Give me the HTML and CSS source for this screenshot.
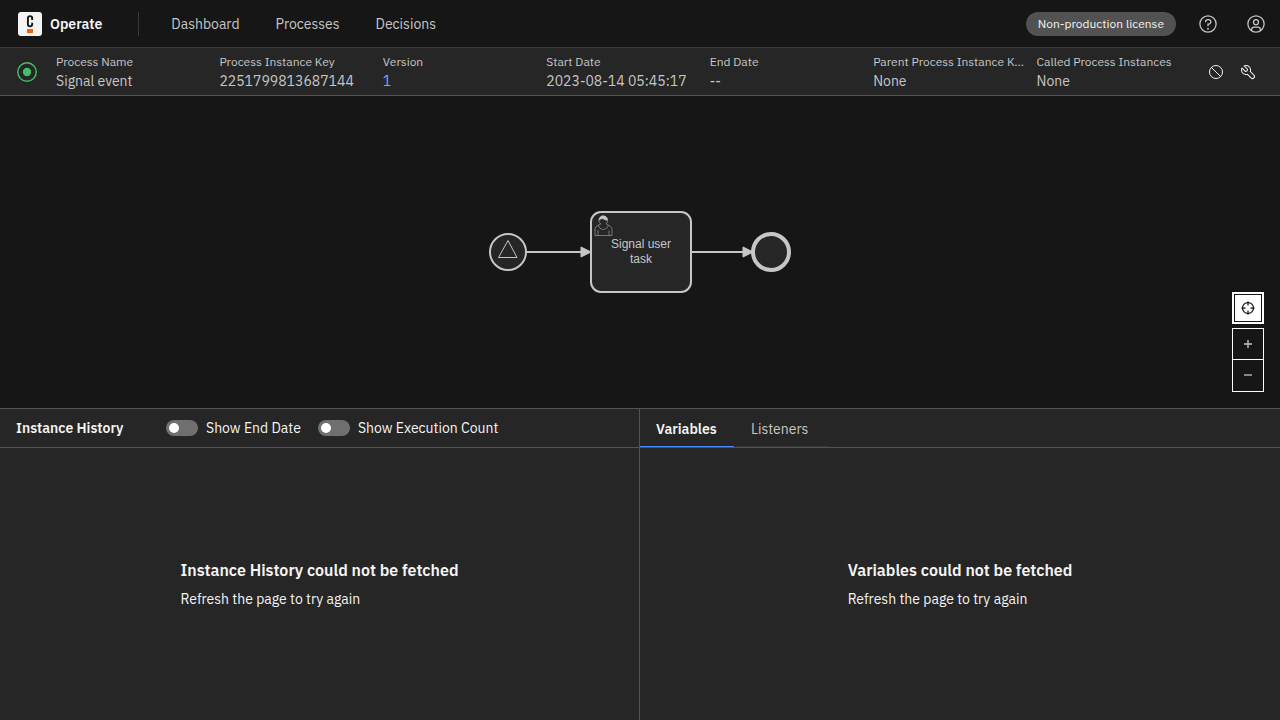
FILE: index.html
```html
<!DOCTYPE html>
<html lang="en">
<head>
<meta charset="utf-8">
<meta name="viewport" content="width=device-width, initial-scale=1">
<title>Operate: Process Instance</title>
<link rel="stylesheet" href="styles.css">
</head>
<body>
<header class="app-header">
  <a class="brand" href="#">
    <svg class="brand-logo" viewBox="0 0 24 24" aria-hidden="true">
      <rect width="24" height="24" rx="3" fill="#f4f4f4"/>
      <path d="M14.200 8V6.500A2.100 2.300 0 0 0 9.900 6.500V12A2.100 2.300 0 0 0 14.200 12V10.800" fill="none" stroke="#161616" stroke-width="1.900"/>
      <rect x="9" y="17" width="6" height="4" fill="#fc5d0d"/>
    </svg>
    Operate
  </a>
  <nav class="main-nav" aria-label="Main">
    <a href="#">Dashboard</a>
    <a href="#">Processes</a>
    <a href="#">Decisions</a>
  </nav>
  <span class="license-tag">Non-production license</span>
  <button class="header-button" type="button" aria-label="Help">
    <svg viewBox="0 0 32 32" width="20" height="20" fill="currentColor"><path d="M16 2a14 14 0 1 0 14 14A14 14 0 0 0 16 2Zm0 26a12 12 0 1 1 12-12 12 12 0 0 1-12 12Z"/><circle cx="16" cy="23.500" r="1.500"/><path d="M17 8h-1.500A4.490 4.490 0 0 0 11 12.490V13h2v-.5a2.500 2.500 0 0 1 2.500-2.500H17a2.500 2.500 0 0 1 0 5h-2v4.500h2V17a4.500 4.500 0 0 0 0-9Z"/></svg>
  </button>
  <button class="header-button" type="button" aria-label="Account">
    <svg viewBox="0 0 32 32" width="20" height="20" fill="currentColor"><path d="M16 8a5 5 0 1 0 5 5 5 5 0 0 0-5-5Zm0 8a3 3 0 1 1 3-3 3 3 0 0 1-3 3Z"/><path d="M16 2a14 14 0 1 0 14 14A14.016 14.016 0 0 0 16 2ZM10 26.377V25a3 3 0 0 1 3-3h6a3 3 0 0 1 3 3v1.377a11.900 11.900 0 0 1-12 0Zm13.993-1.451A5 5 0 0 0 19 20h-6a5 5 0 0 0-4.993 4.926 12 12 0 1 1 15.985 0Z"/></svg>
  </button>
</header>

<section class="instance-header" aria-label="Instance details">
  <svg class="state-icon" viewBox="0 0 22 22" role="img" aria-label="Active"><circle cx="11" cy="11" r="9.250" fill="none" stroke="#42be65" stroke-width="1.400"/><circle cx="11" cy="11" r="4.200" fill="#42be65"/></svg>
  <dl class="details">
    <div><dt>Process Name</dt><dd>Signal event</dd></div>
    <div><dt>Process Instance Key</dt><dd>2251799813687144</dd></div>
    <div><dt>Version</dt><dd><a href="#">1</a></dd></div>
    <div><dt>Start Date</dt><dd>2023-08-14 05:45:17</dd></div>
    <div><dt>End Date</dt><dd>--</dd></div>
    <div><dt>Parent Process Instance Key</dt><dd>None</dd></div>
    <div><dt>Called Process Instances</dt><dd>None</dd></div>
  </dl>
  <div class="operations">
    <button type="button" aria-label="Cancel instance"><svg viewBox="0 0 32 32" width="16" height="16" fill="none" stroke="currentColor" stroke-width="2"><circle cx="16" cy="16" r="13"/><path d="M6.800 6.800 25.200 25.200"/></svg></button>
    <button type="button" aria-label="Modify instance"><svg viewBox="0 0 32 32" width="16" height="16" fill="currentColor"><path d="M12.100 2a9.800 9.800 0 0 0-5.400 1.600l6.400 6.400a2.100 2.100 0 0 1 .2 3 2.100 2.100 0 0 1-3-.2L3.700 6.400A9.840 9.840 0 0 0 2 12.100a10.140 10.140 0 0 0 10.100 10.100 10.900 10.900 0 0 0 2.600-.3l6.700 6.700a5 5 0 0 0 7.100-7.100l-6.700-6.700a10.900 10.900 0 0 0 .3-2.600A10 10 0 0 0 12.100 2Zm8 10.100a7.610 7.610 0 0 1-.3 2.100l-.3 1.100.8.8 6.700 6.700a2.880 2.880 0 0 1 .9 2.100A2.720 2.720 0 0 1 27 27a2.900 2.900 0 0 1-4.200 0l-6.700-6.700-.8-.8-1.100.3a7.610 7.610 0 0 1-2.100.3 8.270 8.270 0 0 1-5.700-2.300A7.630 7.630 0 0 1 4 12.100a8.330 8.330 0 0 1 .3-2.200l4.400 4.400a4.140 4.140 0 0 0 5.900.2 4.140 4.140 0 0 0-.2-5.900L10 4.200a6.450 6.450 0 0 1 2-.3 8.270 8.270 0 0 1 5.700 2.300 8.490 8.490 0 0 1 2.400 5.900Z"/></svg></button>
  </div>
</section>

<main class="workspace">
  <section class="diagram" aria-label="Diagram">
    <svg viewBox="0 0 304 84" width="304" height="84" fill="#262626" stroke="#c6c6c6" stroke-width="2">
      <path d="M38 42H95M204 42H256"/>
      <circle cx="20" cy="42" r="18"/>
      <path d="M20 30.500 29 47.500H10.500Z" stroke-width="1"/>
      <rect x="103" y="2" width="100" height="80" rx="10"/>
      <path d="M93 37 103 42 93 47Z" fill="#c6c6c6" stroke-width="1"/>
      <g transform="translate(118 14)" stroke-width="0.500">
        <path d="M0 0c.909-.845 1.594-2.049 1.594-3.385 0-2.554-1.805-4.622-4.357-4.622s-4.288 2.068-4.288 4.622c0 1.348.974 2.562 1.896 3.405-.529.187-5.669 2.097-5.794 4.756v6.718h17V4.776C6.051 2.478.523.181 0 0zm-8 6v5.500m11 0v-5"/>
        <path d="M2.162 1.009c0 2.447-2.158 4.431-4.821 4.431-2.666 0-4.822-1.981-4.822-4.431"/>
        <path d="M-6.900-3.800s2.251-2.358 4.274-1.177c2.024 1.181 4.221 1.537 4.124.965-.098-.57-.117-3.791-4.191-4.136-3.572 0-4.258 3.137-4.207 4.348z" fill="#c6c6c6"/>
      </g>
      <circle cx="283" cy="42" r="18" stroke-width="4"/>
      <path d="M255 37 265 42 255 47Z" fill="#c6c6c6" stroke-width="1"/>
      <text class="task-label" text-anchor="middle" fill="#c6c6c6" stroke="none"><tspan x="153" y="38">Signal user</tspan><tspan x="153" y="53">task</tspan></text>
    </svg>
    <div class="zoom-controls">
      <button class="reset-zoom" type="button" aria-label="Reset diagram zoom"><svg viewBox="0 0 32 32" width="16" height="16" fill="none" stroke="currentColor"><circle cx="16" cy="16" r="11" stroke-width="2.500"/><path d="M16 3V11M16 21V29M3 16H11M21 16H29" stroke-width="2.500"/></svg></button>
      <div class="zoom-group">
        <button type="button" aria-label="Zoom in diagram"><svg viewBox="0 0 16 16" width="16" height="16" stroke="currentColor" stroke-width="1.300"><path d="M8 4V12M4 8H12"/></svg></button>
        <button type="button" aria-label="Zoom out diagram"><svg viewBox="0 0 16 16" width="16" height="16" stroke="currentColor" stroke-width="1.300"><path d="M4 8H12"/></svg></button>
      </div>
    </div>
  </section>

  <div class="panels">
    <section class="panel">
      <header class="panel-header history-header">
        <h2>Instance History</h2>
        <label class="toggle"><input type="checkbox" role="switch">Show End Date</label>
        <label class="toggle"><input type="checkbox" role="switch">Show Execution Count</label>
      </header>
      <div class="panel-body"><div class="message"><h3>Instance History could not be fetched</h3><p>Refresh the page to try again</p></div></div>
    </section>
    <section class="panel">
      <header class="panel-header" role="tablist">
        <button class="tab tab-selected" type="button" role="tab" aria-selected="true">Variables</button>
        <button class="tab" type="button" role="tab" aria-selected="false">Listeners</button>
      </header>
      <div class="panel-body"><div class="message"><h3>Variables could not be fetched</h3><p>Refresh the page to try again</p></div></div>
    </section>
  </div>
</main>
</body>
</html>
```
FILE: styles.css
```css
* { box-sizing: border-box; }

body {
  margin: 0;
  min-height: 100vh;
  display: flex;
  flex-direction: column;
  background: #161616;
  color: #f4f4f4;
  font: 14px/20px "IBM Plex Sans", Inter, sans-serif;
}

a { color: inherit; text-decoration: none; }
h2, h3, p, dl, dd { margin: 0; }
svg { display: block; }

button {
  display: flex;
  align-items: center;
  justify-content: center;
  padding: 0;
  border: 0;
  background: transparent;
  color: inherit;
  font: inherit;
}

.app-header {
  display: flex;
  align-items: center;
  height: 48px;
  border-bottom: 1px solid #393939;
  color: #c6c6c6;
}

.brand {
  display: flex;
  align-items: center;
  gap: 8px;
  padding: 0 36px 0 18px;
  color: #f4f4f4;
  font-weight: 600;
}

.brand-logo { width: 24px; height: 24px; }

.main-nav {
  display: flex;
  align-items: center;
  gap: 36px;
  height: 24px;
  padding-left: 32px;
  border-left: 1px solid #393939;
}

.license-tag {
  margin-left: auto;
  margin-right: 8px;
  padding: 4px 12px;
  border-radius: 12px;
  background: #525252;
  color: #f4f4f4;
  font-size: 12px;
  line-height: 16px;
}

.header-button { width: 48px; height: 47px; }

.instance-header {
  display: flex;
  align-items: center;
  height: 48px;
  padding: 0 16px;
  border-bottom: 1px solid #525252;
  background: #262626;
  color: #c6c6c6;
}

.state-icon { width: 22px; height: 22px; margin-right: 18px; }

.details {
  flex: 1;
  display: grid;
  grid-template-columns: repeat(7, minmax(0, 1fr));
}

.details dt {
  overflow: hidden;
  padding-right: 12px;
  text-overflow: ellipsis;
  white-space: nowrap;
  font-size: 12px;
  line-height: 18px;
}

.details dd { white-space: nowrap; }
.details a { color: #78a9ff; }
.operations { display: flex; color: #f4f4f4; }
.operations button { width: 32px; height: 32px; }

.workspace {
  flex: 1;
  display: grid;
  grid-template-rows: 1fr 1fr;
}

.diagram {
  position: relative;
  display: flex;
  align-items: center;
  justify-content: center;
}

.task-label { font: 12px "Liberation Sans", sans-serif; }

.zoom-controls {
  position: absolute;
  right: 16px;
  bottom: 16px;
  display: grid;
  gap: 4px;
}

.reset-zoom {
  width: 32px;
  height: 32px;
  border: 2px solid #fff;
  background: #fff;
  color: #161616;
  box-shadow: inset 0 0 0 1px #161616;
}

.zoom-group { border: 1px solid #fff; color: #c6c6c6; }
.zoom-group button { width: 30px; height: 31px; border-bottom: 1px solid #fff; }
.zoom-group button:last-child { border-color: transparent; }

.panels {
  display: grid;
  grid-template-columns: 1fr 1fr;
  border-top: 1px solid #525252;
  background: #262626;
}

.panel { display: flex; flex-direction: column; }
.panel:first-child { border-right: 1px solid #525252; }

.panel-header {
  display: flex;
  height: 39px;
  border-bottom: 1px solid #525252;
}

.history-header { align-items: center; padding-left: 16px; }
.history-header h2 { width: 150px; font-size: 14px; font-weight: 600; }

.toggle { display: flex; align-items: center; gap: 8px; margin-right: 17px; line-height: 18px; }

.toggle input {
  appearance: none;
  display: flex;
  align-items: center;
  width: 32px;
  height: 16px;
  margin: 0;
  padding: 3px;
  border-radius: 8px;
  background: #6f6f6f;
}

.toggle input::before {
  content: "";
  width: 10px;
  height: 10px;
  border-radius: 5px;
  background: #fff;
}

.toggle input:checked { justify-content: flex-end; background: #42be65; }

.tab {
  min-width: 94px;
  padding: 2px 16px 0;
  border-bottom: 1px solid #393939;
  color: #c6c6c6;
  justify-content: flex-start;
}

.tab + .tab { margin-left: 1px; }
.tab-selected { border-color: #4589ff; color: #f4f4f4; font-weight: 600; }

.panel-body {
  flex: 1;
  display: flex;
  align-items: center;
  justify-content: center;
}

.message h3 { margin-bottom: 8px; font-size: 16px; line-height: 22px; font-weight: 600; }
```
